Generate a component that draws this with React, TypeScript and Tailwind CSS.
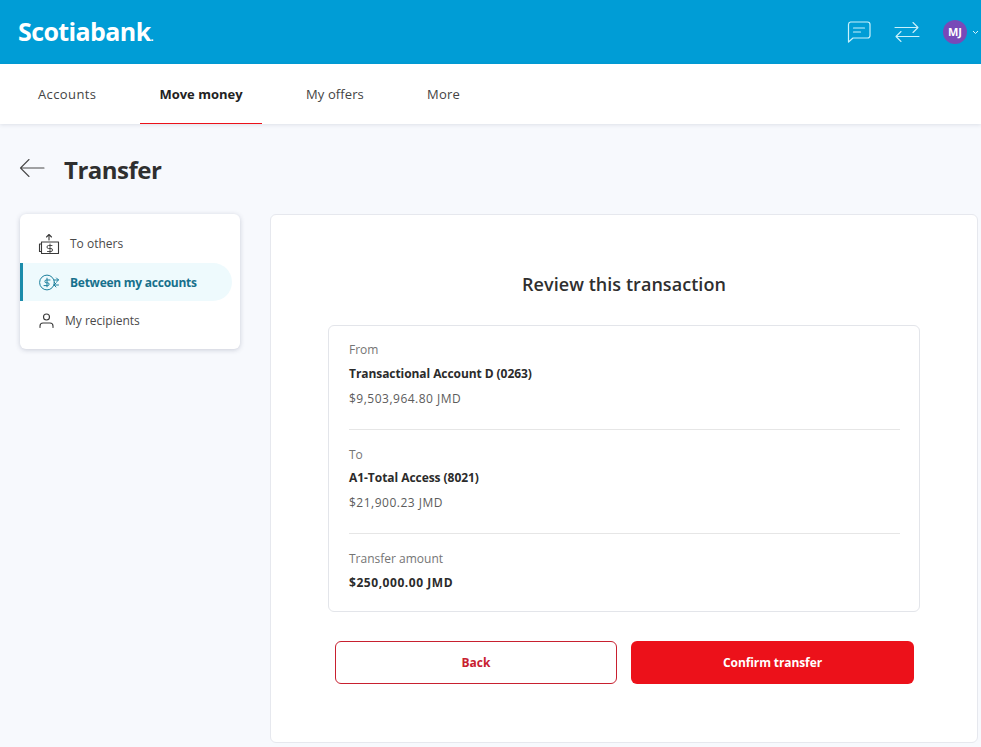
const font = { sans: 'font-["Open_Sans","Liberation_Sans",sans-serif]' };

const tabs = [
  { label: 'Accounts', width: 'w-[140px] pl-[38px] tracking-[0.4px]' },
  { label: 'Move money', width: 'w-[122px] justify-center' },
  { label: 'My offers', width: 'w-[121px] pl-[44px] tracking-[0.1px]' },
  { label: 'More', width: 'w-[100px] pl-[44px] tracking-[0.2px]' },
];

function ChatIcon() {
  return (
    <svg width="26" height="24" viewBox="0 0 26 24" fill="none" stroke="#c9f1fb" strokeWidth="1.2" strokeLinejoin="round" strokeLinecap="round">
      <path d="M4.5 2h17a2.5 2.5 0 0 1 2.5 2.5v11a2.5 2.5 0 0 1-2.5 2.5H7l-4.5 4V4.5A2.5 2.5 0 0 1 4.5 2z" />
      <path d="M7.5 8h11M7.5 12h7" />
    </svg>
  );
}

function SwapIcon() {
  return (
    <svg width="26" height="22" viewBox="0 0 26 22" fill="none" stroke="#c9f1fb" strokeWidth="1.1" strokeLinecap="round" strokeLinejoin="round">
      <path d="M1 6.5h23M19 1.5l5 5-5 5" />
      <path d="M25 15.5H2M7 10.5l-5 5 5 5" />
    </svg>
  );
}

function BackArrow() {
  return (
    <svg width="26" height="20" viewBox="0 0 26 20" fill="none" stroke="#4a4a4a" strokeWidth="1.1" strokeLinecap="round" strokeLinejoin="round">
      <path d="M25 10H1.5M10 1.5L1.5 10l8.5 8.5" />
    </svg>
  );
}

function MoneyUpIcon() {
  return (
    <svg width="22" height="22" viewBox="0 0 22 22" fill="none" stroke="#3a3a3a" strokeWidth="1.1" strokeLinecap="round" strokeLinejoin="round">
      <path d="M3.5 9H20.5V20.5H3.5z" />
      <path d="M1.5 11v7.5h2M1.5 11h2" />
      <path d="M11 7V1.5M8.5 4L11 1.5 13.5 4" />
      <path d="M14 12.5h-3.5a1.3 1.3 0 0 0 0 3h2.5a1.3 1.3 0 0 1 0 3H9.5M12 11v9" strokeWidth="0.9" />
    </svg>
  );
}

function DollarSwapIcon() {
  return (
    <svg width="20" height="17" viewBox="0 0 20 17" fill="none" stroke="#1b7f9c" strokeWidth="1" strokeLinecap="round" strokeLinejoin="round">
      <circle cx="8" cy="8.5" r="7.4" />
      <path d="M11 6H7.3a1.4 1.4 0 0 0 0 2.8h1.4a1.4 1.4 0 0 1 0 2.8H5M8 4.2v8.6" />
      <path d="M15 6h4.5M17.5 4l2 2-2 2M19.5 11H15M17 9l-2 2 2 2" />
    </svg>
  );
}

function PersonIcon() {
  return (
    <svg width="15" height="15" viewBox="0 0 15 15" fill="none" stroke="#3a3a3a" strokeWidth="1.1" strokeLinecap="round">
      <circle cx="7.5" cy="4" r="3" />
      <path d="M1 14.5v-1.5a3 3 0 0 1 3-3h7a3 3 0 0 1 3 3v1.5" />
    </svg>
  );
}

function Row({ label, name, amount, nameClass = 'mt-[8px]' }: { label: string; name: string; amount?: string; nameClass?: string }) {
  return (
    <div className="flex flex-col">
      <p className="text-[12px] leading-[16px] text-[#757575]">{label}</p>
      <p className={`text-[12px] leading-[16px] font-bold text-[#2b2b2b] ${nameClass}`}>{name}</p>
      {amount && <p className="mt-[9px] text-[12px] leading-[16px] tracking-[0.5px] text-[#5c5c5c]">{amount}</p>}
    </div>
  );
}

export default function App() {
  return (
    <div className={`h-[747px] w-[981px] overflow-hidden bg-[#f7f9fd] ${font.sans}`}>
      {/* Top bar */}
      <header className="flex h-16 items-center justify-between bg-[#009dd6] pl-[18px]">
        <span className="-mt-[2px] flex items-baseline text-[25px] leading-none font-bold tracking-[-0.6px] text-white">
          Scotiabank<span className="text-[11px]">.</span>
        </span>
        <div className="flex items-center">
          <ChatIcon />
          <span className="ml-[22px]">
            <SwapIcon />
          </span>
          <span className="ml-[23px] flex h-6 w-6 items-center justify-center rounded-full bg-[#7849b8] text-[11px] font-bold text-white">
            MJ
          </span>
          <svg className="mr-[2px] ml-[5px]" width="7" height="5" viewBox="0 0 7 5" fill="none" stroke="#d8f4fc" strokeWidth="1">
            <path d="M1 1l2.5 2.5L6 1" />
          </svg>
        </div>
      </header>

      {/* Tabs */}
      <nav className="flex h-[60px] bg-white shadow-[0_1px_4px_rgba(40,50,80,0.12)]">
        {tabs.map((t) => (
          <div key={t.label} className={`relative flex h-full items-center pt-[1px] text-[13px] ${t.width} ${t.label === 'Move money' ? 'font-bold text-[#222]' : 'text-[#444]'}`}>
            {t.label}
            {t.label === 'Move money' && <span className="absolute right-0 bottom-0 left-0 h-px bg-[#ec111a]" />}
          </div>
        ))}
      </nav>

      {/* Page title */}
      <div className="flex h-[90px] items-center pt-[2px] pl-[19px]">
        <span className="-mt-[4px]">
          <BackArrow />
        </span>
        <h1 className="ml-[19px] text-[24px] font-bold tracking-[-0.5px] text-[#2f2f2f]">Transfer</h1>
      </div>

      <div className="flex items-start pl-[20px]">
        {/* Side menu */}
        <aside className="h-[135px] w-[220px] rounded-[6px] bg-white pt-[10px] shadow-[0_1px_5px_rgba(40,50,80,0.22)]">
          <div className="flex h-[39px] items-center pl-[18px] text-[12px] text-[#4a4a4a]">
            <MoneyUpIcon />
            <span className="ml-[10px]">To others</span>
          </div>
          <div className="flex h-[38px] w-[212px] items-center rounded-r-[19px] border-l-[3px] border-[#1b8cab] bg-[#eefafd] pt-[1px] pl-[16px] text-[12px] font-bold tracking-[-0.25px] text-[#17708c]">
            <DollarSwapIcon />
            <span className="ml-[11px]">Between my accounts</span>
          </div>
          <div className="flex h-[39px] items-center pl-[19px] text-[12px] text-[#4a4a4a]">
            <PersonIcon />
            <span className="ml-[11px]">My recipients</span>
          </div>
        </aside>

        {/* Review panel */}
        <main className="ml-[30px] h-[529px] w-[708px] rounded-[6px] border border-[#e6e8ee] bg-white pt-[56px]">
          <h2 className="text-center text-[18px] leading-[26px] font-semibold tracking-[0.05px] text-[#2f2f2f]">Review this transaction</h2>

          <section className="mx-[57px] mt-[28px] h-[287px] rounded-[6px] border border-[#e3e5ea] pt-[16px] pr-[19px] pl-[20px]">
            <Row label="From" name="Transactional Account D (0263)" nameClass="mt-[8px] tracking-[-0.07px]" amount="$9,503,964.80 JMD" />
            <div className="mt-[22px] mb-[17px] h-px bg-[#e6e6e6]" />
            <Row label="To" name="A1-Total Access (8021)" nameClass="mt-[7px] tracking-[-0.05px]" amount="$21,900.23 JMD" />
            <div className="mt-[22px] mb-[17px] h-px bg-[#e6e6e6]" />
            <Row label="Transfer amount" name="$250,000.00 JMD" nameClass="mt-[8px] tracking-[0.55px]" />
          </section>

          <div className="mt-[29px] mr-[63px] ml-[64px] flex gap-[14px]">
            <button className="flex h-[43px] w-[282px] items-center justify-center rounded-[6px] border border-[#c8202f] bg-white text-[12px] font-bold text-[#c8202f]">
              Back
            </button>
            <button className="flex h-[43px] w-[283px] items-center justify-center rounded-[6px] bg-[#ec111a] text-[12px] font-bold tracking-[-0.1px] text-white">
              Confirm transfer
            </button>
          </div>
        </main>
      </div>
    </div>
  );
}
